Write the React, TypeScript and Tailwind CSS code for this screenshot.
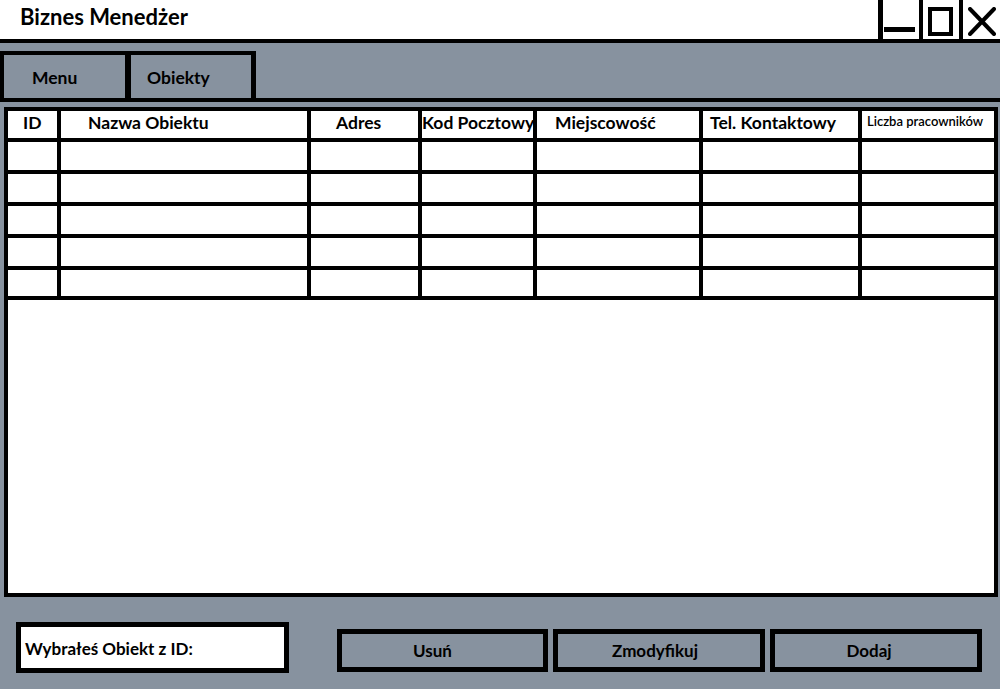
import React from 'react';

const font = { fontFamily: 'Lato, "Open Sans", sans-serif' };

interface Column {
  title: string;
  pad: string;
  small?: boolean;
}

const columns: Column[] = [
  { title: 'ID', pad: 'pl-[15px]' },
  { title: 'Nazwa Obiektu', pad: 'pl-[27px]' },
  { title: 'Adres', pad: 'pl-[25px]' },
  { title: 'Kod Pocztowy', pad: 'pl-0' },
  { title: 'Miejscowość', pad: 'pl-[18px]' },
  { title: 'Tel. Kontaktowy', pad: 'pl-[7px]' },
  { title: 'Liczba pracowników', pad: 'pl-[5px]', small: true },
];

const rowHeights = ['h-[28px]', 'h-[28px]', 'h-[28px]', 'h-[28px]', 'h-[26px]'];

const WindowControls = () => (
  <div className="flex h-full">
    <div className="w-[41px] h-full border-l-[5px] border-black relative">
      <div className="absolute left-[1px] top-[27px] w-[31px] h-[5px] bg-black" />
    </div>
    <div className="w-[40px] h-full border-l-[4px] border-black flex pl-[5px] pt-[7px]">
      <div className="w-[25px] h-[29px] border-[4px] border-black" />
    </div>
    <div className="w-[41px] h-full border-l-[4px] border-black pl-[5px] pt-[7px]">
      <svg width="28" height="29" viewBox="0 0 28 29">
        <line x1="2" y1="2" x2="26" y2="27" stroke="black" strokeWidth="4" strokeLinecap="round" />
        <line x1="26" y1="2" x2="2" y2="27" stroke="black" strokeWidth="4" strokeLinecap="round" />
      </svg>
    </div>
  </div>
);

const App = () => {
  return (
    <div className="w-[1000px] h-[689px] flex flex-col bg-[#87929f] text-black overflow-hidden" style={font}>
      {/* title bar */}
      <div className="h-[43px] bg-white border-b-4 border-black flex items-stretch justify-between">
        <div className="pl-[20px] text-[22px] font-bold leading-[34px]">Biznes Menedżer</div>
        <WindowControls />
      </div>

      {/* tabs */}
      <div className="mt-[8px] flex">
        <div className="flex border-t-4 border-l-4 border-r-[5px] border-black h-[47px]">
          <div className="w-[121px] flex items-center pl-[28px] pt-[4px] text-[17.5px] font-bold">Menu</div>
          <div className="w-[6px] bg-black" />
          <div className="w-[120px] flex items-center pl-[16px] pt-[4px] text-[17.5px] font-bold">Obiekty</div>
        </div>
      </div>
      <div className="h-[4px] bg-black" />

      {/* table */}
      <div className="mt-[5px] ml-[4px] mr-[2px] h-[490px] border-4 border-black bg-white flex flex-col">
        <div className="grid grid-cols-[49px_246px_107px_111px_162px_155px_132px] gap-x-[4px] gap-y-[4px] bg-black border-b-4 border-black">
          {columns.map(col => (
            <div
              key={col.title}
              className={`h-[27px] bg-white flex items-center whitespace-nowrap ${col.pad} ${
                col.small ? 'text-[13px] font-semibold pb-[5px]' : 'text-[17.5px] font-bold pb-[3px]'
              }`}
            >
              {col.title}
            </div>
          ))}
          {rowHeights.map((h, r) =>
            columns.map(col => <div key={`${r}-${col.title}`} className={`${h} bg-white`} />),
          )}
        </div>
        <div className="flex-1 bg-white" />
      </div>

      {/* bottom bar */}
      <div className="flex items-start pt-[25px] pl-[16px]">
        <div className="w-[273px] h-[51px] border-[5px] border-black bg-white flex items-center pl-[4px] pt-[2px] text-[17px] font-bold">
          Wybrałeś Obiekt z ID:
        </div>
        <div className="flex gap-[5px] ml-[48px] mt-[7px]">
          <button className="w-[211px] h-[43px] border-[5px] border-black text-[17px] font-bold flex items-center justify-center pr-[20px]">
            Usuń
          </button>
          <button className="w-[212px] h-[43px] border-[5px] border-black text-[17px] font-bold flex items-center justify-center pr-[8px]">
            Zmodyfikuj
          </button>
          <button className="w-[212px] h-[43px] border-[5px] border-black text-[17px] font-bold flex items-center justify-center pr-[14px]">
            Dodaj
          </button>
        </div>
      </div>
    </div>
  );
};

export default App;
